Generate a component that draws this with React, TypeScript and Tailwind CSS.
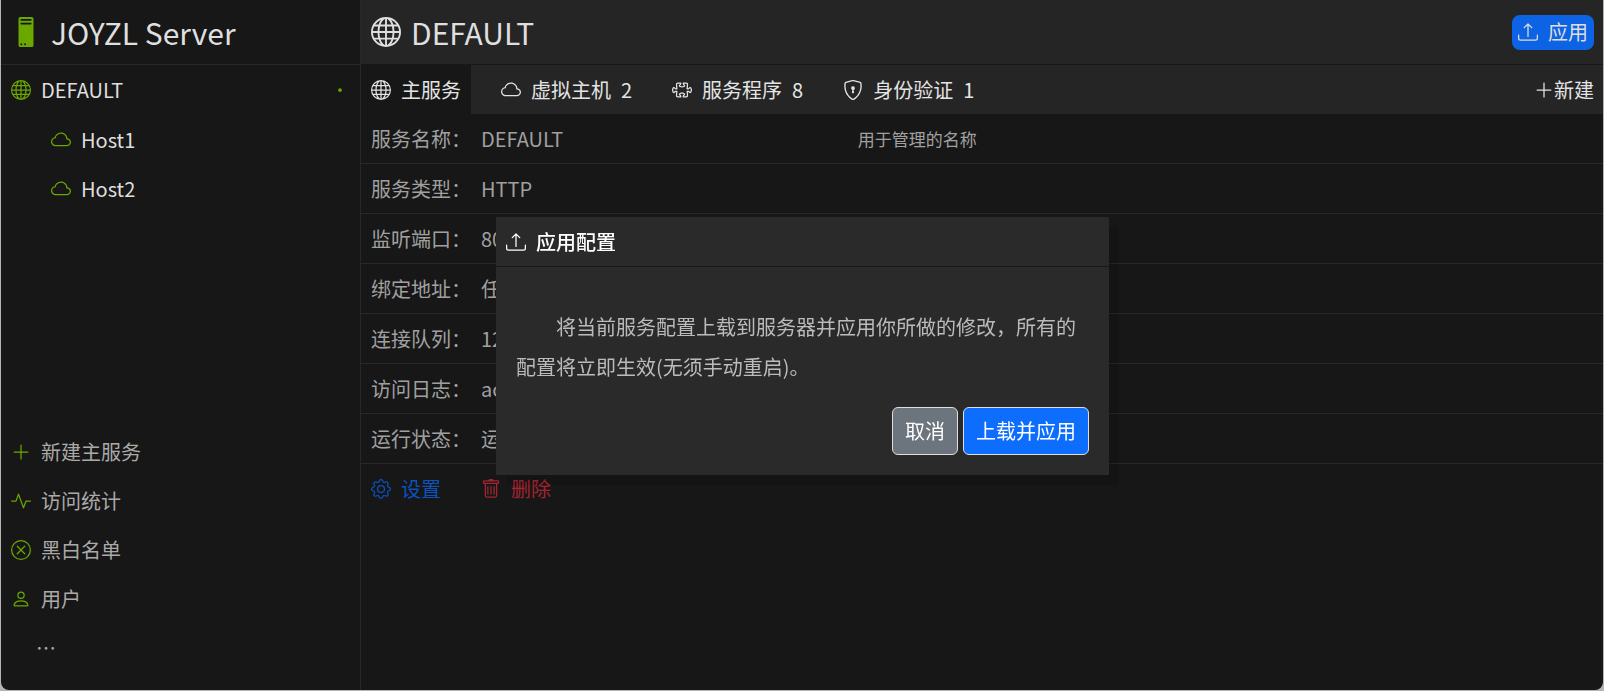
import { useState } from "react";
import { BsActivity, BsCloud, BsDot, BsGear, BsGlobe, BsPc, BsPerson, BsPlusLg, BsPuzzle, BsShieldLock, BsTrash, BsUpload, BsXCircle } from "react-icons/bs";

const hosts = ["Host1", "Host2"];

const links = [
  { name: "新建主服务", Icon: BsPlusLg },
  { name: "访问统计", Icon: BsActivity },
  { name: "黑白名单", Icon: BsXCircle },
  { name: "用户", Icon: BsPerson },
];

const tabs = [
  { name: "主服务", Icon: BsGlobe },
  { name: "虚拟主机", Icon: BsCloud, count: 2 },
  { name: "服务程序", Icon: BsPuzzle, count: 8 },
  { name: "身份验证", Icon: BsShieldLock, count: 1 },
];

const fields = [
  { label: "服务名称", value: "DEFAULT", note: "用于管理的名称" },
  { label: "服务类型", value: "HTTP" },
  { label: "监听端口", value: "80" },
  { label: "绑定地址", value: "任意" },
  { label: "连接队列", value: "128" },
  { label: "访问日志", value: "acc" },
  { label: "运行状态", value: "运行" },
];

function Sidebar() {
  return (
    <aside className="flex w-[360px] shrink-0 flex-col border-r border-[#282828]">
      <div className="flex h-[65px] items-center gap-2.5 border-b border-[#282828] px-2.5 text-3xl text-[#dfdfdf]">
        <BsPc className="size-[30px] text-[#6aa800]" />
        <h1>JOYZL Server</h1>
      </div>
      <nav className="flex grow flex-col pb-[18px] text-[#dfdfdf]">
        <a href="#default" className="flex h-[50px] items-center gap-2.5 px-2.5">
          <BsGlobe className="text-[#6aa800]" />
          <span className="grow">DEFAULT</span>
          <BsDot className="text-[#6aa800]" />
        </a>
        {hosts.map((h) => (
          <a key={h} href="#host" className="flex h-[49px] items-center gap-2.5 pl-[50px]">
            <BsCloud className="text-[#6aa800]" />
            {h}
          </a>
        ))}
        <div className="mt-auto text-[#aaa]">
          {links.map(({ name, Icon }) => (
            <a key={name} href="#link" className="flex h-[49px] items-center gap-2.5 px-2.5">
              <Icon className="text-[#6aa800]" />
              {name}
            </a>
          ))}
          <a href="#more" className="flex h-[49px] items-center pl-[35px]">…</a>
        </div>
      </nav>
    </aside>
  );
}

function ApplyDialog({ onClose }: { onClose: () => void }) {
  return (
    <div className="fixed inset-0 flex items-center justify-center pt-px pl-px">
      <div role="dialog" aria-labelledby="apply-title" className="w-[613px] bg-[#2a2a2a] shadow-[10px_10px_0_rgba(0,0,0,0.1)]">
        <div className="flex h-[50px] items-center gap-2.5 border-b border-[#171717] px-2.5 text-white">
          <BsUpload />
          <h2 id="apply-title" className="font-medium">应用配置</h2>
        </div>
        <div className="px-5 pt-10 pb-5">
          <p className="indent-[40px] leading-10 text-[#bbb]">将当前服务配置上载到服务器并应用你所做的修改，所有的配置将立即生效(无须手动重启)。</p>
          <div className="mt-5 flex justify-end gap-[5px] text-white">
            <button className="h-12 rounded-md border border-[#dfdfdf] bg-[#6c757d] px-3" onClick={onClose}>取消</button>
            <button className="h-12 rounded-md border border-[#dfdfdf] bg-[#0d6efd] px-3" onClick={onClose}>上载并应用</button>
          </div>
        </div>
      </div>
    </div>
  );
}

export default function App() {
  const [tab, setTab] = useState("主服务");
  const [open, setOpen] = useState(true);

  return (
    <div lang="zh-CN" className="flex min-h-screen bg-[#b4b4b4] px-px pb-px font-['Noto_Sans_CJK_SC',sans-serif] text-xl [&_svg]:shrink-0">
      <div className="flex grow overflow-hidden rounded-b-lg bg-[#171717]">
        <Sidebar />
        <main className="min-w-0 grow">
          <header className="flex h-[65px] items-center gap-2.5 border-b border-[#171717] bg-[#252525] pr-[9px] pl-2.5 text-3xl text-[#dfdfdf]">
            <BsGlobe className="size-[30px]" />
            <h2 className="grow">DEFAULT</h2>
            <button className="flex h-[35px] items-center gap-2.5 rounded-lg bg-[#0c63e4] px-1.5 text-xl" onClick={() => setOpen(true)}>
              <BsUpload />
              应用
            </button>
          </header>
          <div className="flex h-[49px] gap-5 bg-[#252525] text-[#e4e4e4]">
            {tabs.map(({ name, Icon, count }) => (
              <button key={name} className={`flex items-center gap-2.5 px-2.5 ${tab === name ? "bg-[#171717]" : ""}`} onClick={() => setTab(name)}>
                <Icon />
                <span>{name}</span>
                {count && <span>{count}</span>}
              </button>
            ))}
            <button className="ml-auto flex items-center pr-[9px]">
              <BsPlusLg />
              新建
            </button>
          </div>
          <table className="w-full table-fixed border-separate border-spacing-0 text-[#a0a0a0] [&_td]:border-b [&_td]:border-[#282828] [&_th]:border-b [&_th]:border-[#282828]">
            <colgroup>
              <col className="w-[120px]" />
              <col />
              <col className="w-3/5" />
            </colgroup>
            <tbody>
              {fields.map((f) => (
                <tr key={f.label} className="h-[50px]">
                  <th scope="row" className="pl-2.5 text-left font-normal whitespace-nowrap">{f.label}：</th>
                  <td>{f.value}</td>
                  <td className="text-[17px]">{f.note}</td>
                </tr>
              ))}
            </tbody>
          </table>
          <div className="flex h-[50px] items-center gap-10 px-2.5">
            <button className="flex items-center gap-2.5 text-[#0a52bd]">
              <BsGear />
              设置
            </button>
            <button className="flex items-center gap-2.5 text-[#a5242f]">
              <BsTrash />
              删除
            </button>
          </div>
        </main>
      </div>
      {open && <ApplyDialog onClose={() => setOpen(false)} />}
    </div>
  );
}
